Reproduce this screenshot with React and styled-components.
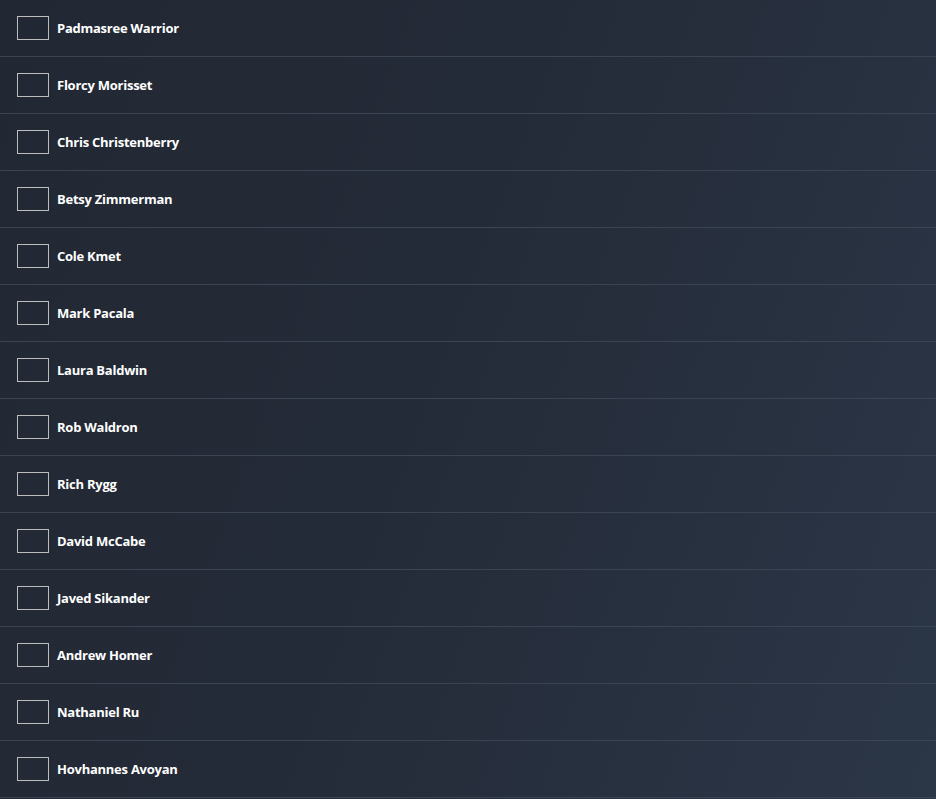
import React from "react";
import styled, { createGlobalStyle } from "styled-components";

const GlobalStyle = createGlobalStyle`
  html, body {
    margin: 0;
    padding: 0;
    background: #232a36;
  }
  body {
    font-family: "Segoe UI", "Open Sans", "Noto Sans", sans-serif;
  }
`;

const List = styled.div`
  width: 936px;
  min-height: 799px;
  background: linear-gradient(110deg, #222833 0%, #242b38 45%, #2b3647 100%);
`;

const Row = styled.label`
  display: flex;
  align-items: center;
  height: 56px;
  padding-left: 17px;
  border-bottom: 1px solid #3b4452;
  cursor: pointer;
`;

const Box = styled.span`
  box-sizing: border-box;
  width: 32px;
  height: 24px;
  border: 1px solid #bdbdbd;
  flex-shrink: 0;
`;

const Name = styled.span`
  margin-left: 8px;
  color: #ffffff;
  font-size: 13px;
  font-weight: 700;
  letter-spacing: -0.25px;
`;

const people = [
  "Padmasree Warrior",
  "Florcy Morisset",
  "Chris Christenberry",
  "Betsy Zimmerman",
  "Cole Kmet",
  "Mark Pacala",
  "Laura Baldwin",
  "Rob Waldron",
  "Rich Rygg",
  "David McCabe",
  "Javed Sikander",
  "Andrew Homer",
  "Nathaniel Ru",
  "Hovhannes Avoyan",
];

const App = () => {
  return (
    <>
      <GlobalStyle />
      <List>
        {people.map((name) => (
          <Row key={name}>
            <Box />
            <Name>{name}</Name>
          </Row>
        ))}
      </List>
    </>
  );
};

export default App;
